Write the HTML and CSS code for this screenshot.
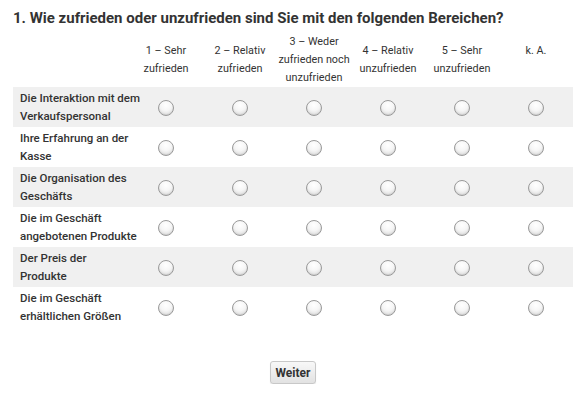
FILE: index.html
```html
<!DOCTYPE html>
<html lang="de">
<head>
    <meta charset="UTF-8">
    <meta name="viewport" content="width=device-width, initial-scale=1.0">
    <title>Umfrage</title>
    <link rel="stylesheet" href="styles.css">
</head>
<body>
    <form class="survey">
        <h1 class="question">1. Wie zufrieden oder unzufrieden sind Sie mit den folgenden Bereichen?</h1>
        <table class="matrix">
            <thead>
                <tr>
                    <th class="label-col"></th>
                    <th>1 – Sehr<br>zufrieden</th>
                    <th>2 – Relativ<br>zufrieden</th>
                    <th>3 – Weder<br>zufrieden noch<br>unzufrieden</th>
                    <th>4 – Relativ<br>unzufrieden</th>
                    <th>5 – Sehr<br>unzufrieden</th>
                    <th class="na">k. A.</th>
                </tr>
            </thead>
            <tbody>
                <tr>
                    <td class="label-col">Die Interaktion mit dem<br>Verkaufspersonal</td>
                    <td><span class="radio"></span></td>
                    <td><span class="radio"></span></td>
                    <td><span class="radio"></span></td>
                    <td><span class="radio"></span></td>
                    <td><span class="radio"></span></td>
                    <td><span class="radio"></span></td>
                </tr>
                <tr>
                    <td class="label-col">Ihre Erfahrung an der<br>Kasse</td>
                    <td><span class="radio"></span></td>
                    <td><span class="radio"></span></td>
                    <td><span class="radio"></span></td>
                    <td><span class="radio"></span></td>
                    <td><span class="radio"></span></td>
                    <td><span class="radio"></span></td>
                </tr>
                <tr>
                    <td class="label-col">Die Organisation des<br>Geschäfts</td>
                    <td><span class="radio"></span></td>
                    <td><span class="radio"></span></td>
                    <td><span class="radio"></span></td>
                    <td><span class="radio"></span></td>
                    <td><span class="radio"></span></td>
                    <td><span class="radio"></span></td>
                </tr>
                <tr>
                    <td class="label-col">Die im Geschäft<br>angebotenen Produkte</td>
                    <td><span class="radio"></span></td>
                    <td><span class="radio"></span></td>
                    <td><span class="radio"></span></td>
                    <td><span class="radio"></span></td>
                    <td><span class="radio"></span></td>
                    <td><span class="radio"></span></td>
                </tr>
                <tr>
                    <td class="label-col">Der Preis der<br>Produkte</td>
                    <td><span class="radio"></span></td>
                    <td><span class="radio"></span></td>
                    <td><span class="radio"></span></td>
                    <td><span class="radio"></span></td>
                    <td><span class="radio"></span></td>
                    <td><span class="radio"></span></td>
                </tr>
                <tr>
                    <td class="label-col">Die im Geschäft<br>erhältlichen Größen</td>
                    <td><span class="radio"></span></td>
                    <td><span class="radio"></span></td>
                    <td><span class="radio"></span></td>
                    <td><span class="radio"></span></td>
                    <td><span class="radio"></span></td>
                    <td><span class="radio"></span></td>
                </tr>
            </tbody>
        </table>
        <div class="actions">
            <button type="button" class="next">Weiter</button>
        </div>
    </form>
</body>
</html>
```

FILE: styles.css
```css
* {
    margin: 0;
    padding: 0;
    box-sizing: border-box;
}
body {
    font-family: Roboto, "Liberation Sans", sans-serif;
    color: #333333;
    background-color: #FFFFFF;
    padding: 8px 9px 0 13px;
}
.question {
    font-size: 15px;
    font-weight: bold;
    line-height: 20px;
    color: #333333;
    margin-bottom: 5px;
}
.matrix {
    border-collapse: collapse;
    table-layout: fixed;
    width: 560px;
}
.matrix th {
    width: 74px;
    font-size: 10.8px;
    font-weight: normal;
    line-height: 18px;
    text-align: center;
    vertical-align: middle;
    white-space: nowrap;
    height: 54px;
    color: #333333;
}
.matrix th.label-col {
    width: 116px;
}
.matrix th.na {
    padding-bottom: 18px;
}
.matrix td {
    height: 40px;
    text-align: center;
    vertical-align: middle;
}
.matrix tbody tr:nth-child(odd) {
    background-color: #F0F0F0;
}
.matrix td.label-col {
    text-align: left;
    font-size: 11.5px;
    font-weight: 500;
    line-height: 18px;
    padding-left: 7px;
    white-space: nowrap;
    color: #333333;
}
.radio {
    display: inline-block;
    width: 16px;
    height: 16px;
    border-radius: 50%;
    border: 1px solid #9A9A9A;
    background: radial-gradient(circle at 50% 30%, #FFFFFF 0%, #F6F6F6 45%, #D4D4D4 100%);
    box-shadow: inset 0 -1px 1px rgba(0, 0, 0, .08);
    vertical-align: middle;
}
.actions {
    display: flex;
    justify-content: center;
    padding-top: 34px;
    width: 560px;
}
.next {
    font-family: Roboto, "Liberation Sans", sans-serif;
    font-size: 12px;
    font-weight: bold;
    color: #333333;
    padding: 0 5px;
    height: 23px;
    border: 1px solid #C8C8C8;
    border-radius: 3px;
    background: linear-gradient(to bottom, #F8F8F8, #E2E2E2);
    box-shadow: 0 1px 1px rgba(0, 0, 0, .1);
    cursor: pointer;
}
```
